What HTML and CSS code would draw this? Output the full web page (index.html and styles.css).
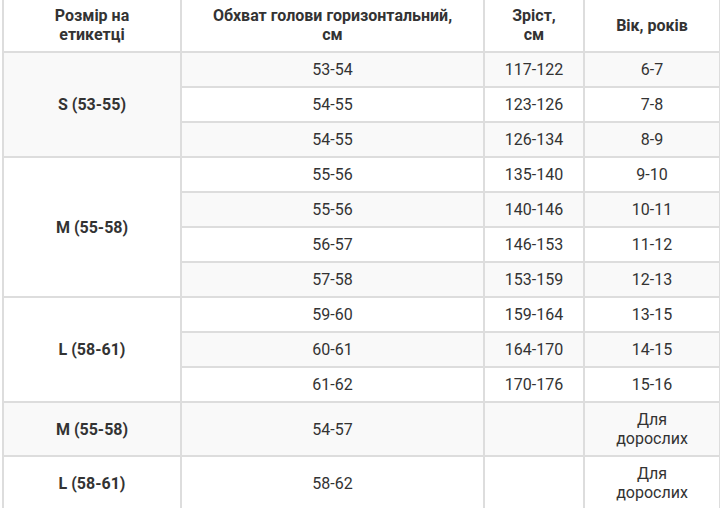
FILE: index.html
```html
<!DOCTYPE html>
<html lang="uk">
<head>
<meta charset="utf-8">
<title>Таблиця розмірів</title>
<link rel="stylesheet" href="styles.css">
</head>
<body>
<table class="size-table">
  <colgroup>
    <col class="c-label">
    <col class="c-head">
    <col class="c-height">
    <col class="c-age">
  </colgroup>
  <thead>
    <tr>
      <th>Розмір на<br>етикетці</th>
      <th>Обхват голови горизонтальний,<br>см</th>
      <th>Зріст,<br>см</th>
      <th>Вік, років</th>
    </tr>
  </thead>
  <tbody>
    <tr><td class="label" rowspan="3">S (53-55)</td><td>53-54</td><td>117-122</td><td>6-7</td></tr>
    <tr><td>54-55</td><td>123-126</td><td>7-8</td></tr>
    <tr><td>54-55</td><td>126-134</td><td>8-9</td></tr>
    <tr><td class="label" rowspan="4">M (55-58)</td><td>55-56</td><td>135-140</td><td>9-10</td></tr>
    <tr><td>55-56</td><td>140-146</td><td>10-11</td></tr>
    <tr><td>56-57</td><td>146-153</td><td>11-12</td></tr>
    <tr><td>57-58</td><td>153-159</td><td>12-13</td></tr>
    <tr><td class="label" rowspan="3">L (58-61)</td><td>59-60</td><td>159-164</td><td>13-15</td></tr>
    <tr><td>60-61</td><td>164-170</td><td>14-15</td></tr>
    <tr><td>61-62</td><td>170-176</td><td>15-16</td></tr>
    <tr><td class="label">M (55-58)</td><td>54-57</td><td></td><td>Для<br>дорослих</td></tr>
    <tr><td class="label">L (58-61)</td><td>58-62</td><td></td><td>Для<br>дорослих</td></tr>
  </tbody>
</table>
</body>
</html>
```
FILE: styles.css
```css
html {
  overflow: hidden;
}

body {
  margin: 0;
  background: #fff;
  font-family: Roboto, "Open Sans", sans-serif;
  font-size: 16px;
  color: #333;
}

.size-table {
  margin: -3px 0 0 2px;
  width: 719px;
  table-layout: fixed;
  border: 1px solid #ddd;
  border-spacing: 0;
}

.c-label { width: 178px; }
.c-head { width: 303px; }
.c-height { width: 100px; }
.c-age { width: 136px; }

.size-table th,
.size-table td {
  border: 1px solid #ddd;
  padding: 7px 8px;
  line-height: 19px;
  text-align: center;
  vertical-align: middle;
}

.size-table th {
  font-weight: 700;
  background: #fff;
}

.size-table tbody tr:nth-child(odd) {
  background: #f9f9f9;
}

.size-table .label {
  font-weight: 700;
}
```
